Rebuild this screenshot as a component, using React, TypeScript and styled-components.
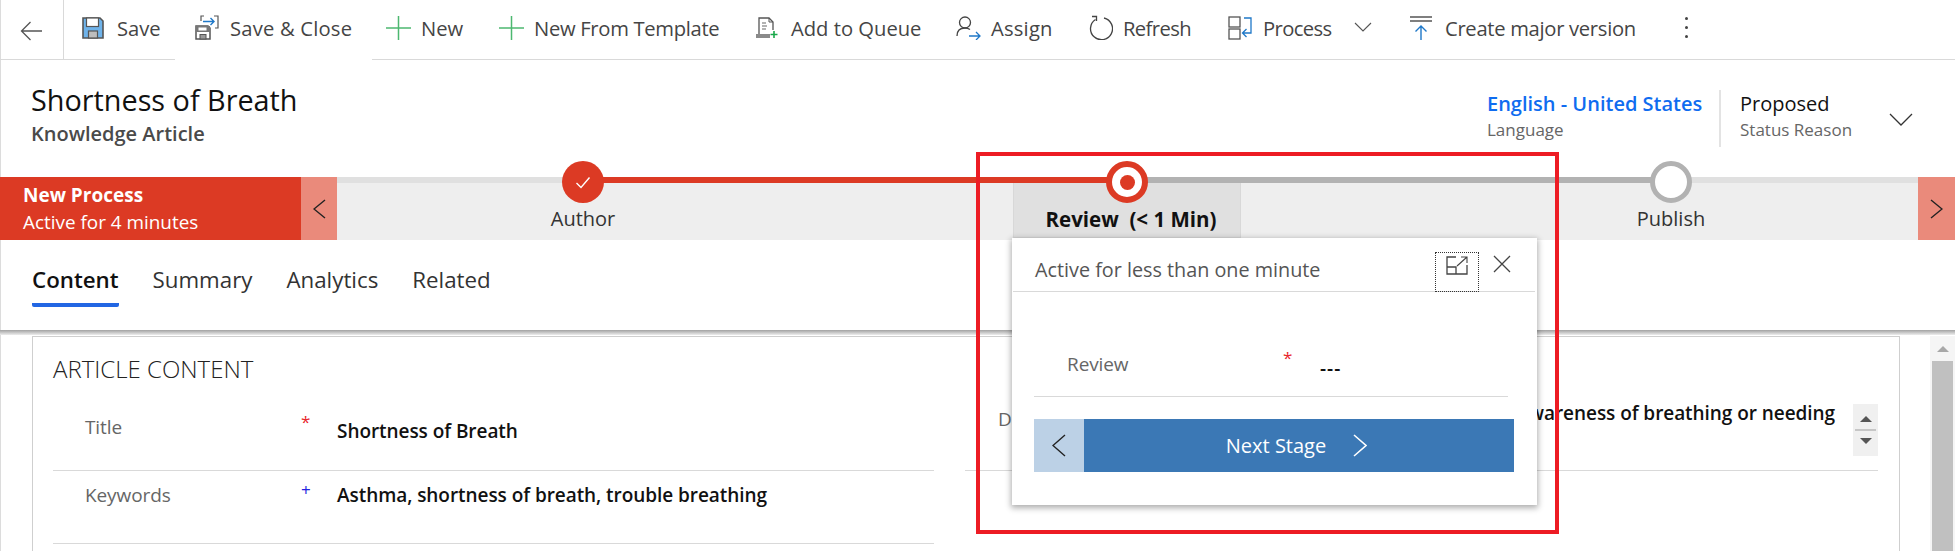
import React from "react";
import styled, { createGlobalStyle } from "styled-components";

const Global = createGlobalStyle`
  html, body { margin: 0; padding: 0; background: #fff; }
  * { box-sizing: border-box; }
`;

const Page = styled.div`
  position: relative;
  width: 1955px;
  height: 551px;
  overflow: hidden;
  background: #fff;
  box-shadow: inset 1px 0 0 #dcdcdc;
  font-family: "Open Sans", "Noto Sans", sans-serif;
  color: #333;
`;

/* ---------- command bar ---------- */
const Toolbar = styled.div`
  display: flex;
  align-items: center;
  height: 60px;
  border-bottom: 1px solid #d9d9d9;
  padding-right: 20px;
`;
const BackButton = styled.div`
  display: flex;
  align-items: center;
  justify-content: center;
  width: 64px;
  height: 59px;
  padding-right: 1px;
  padding-top: 2px;
  margin-right: 18px;
  border-right: 1px solid #d9d9d9;
`;
const ToolButton = styled.div<{ $w: number; $ls: number; $open?: boolean }>`
  position: relative;
  display: flex;
  align-items: center;
  width: ${(p) => p.$w}px;
  height: 59px;
  padding-bottom: 4px;
  font-size: 20.2px;
  letter-spacing: ${(p) => p.$ls}px;
  color: #454545;
  white-space: nowrap;
  ${(p) =>
    p.$open
      ? `&::after { content: ""; position: absolute; left: -20px; right: 14px; bottom: -1px; height: 1px; background: #fff; }`
      : ""}
`;
const IconSlot = styled.span`
  display: flex;
  align-items: center;
  width: 35px;
  flex: none;
  svg { display: block; }
`;
const Caret = styled.span`
  display: flex;
  margin-left: 22px;
  margin-top: -2px;
`;
const More = styled.div`
  display: flex;
  flex-direction: column;
  gap: 6px;
  margin-top: -4px;
`;
const Dot = styled.i`
  display: block;
  width: 3px;
  height: 3px;
  border-radius: 50%;
  background: #444;
`;

/* ---------- record header ---------- */
const Header = styled.div`
  display: flex;
  justify-content: space-between;
  height: 117px;
  padding-left: 31px;
`;
const TitleBlock = styled.div`
  padding-top: 22px;
`;
const RecordTitle = styled.div`
  font-size: 28.8px;
  line-height: 36px;
  font-weight: 500;
  color: #111;
`;
const RecordType = styled.div`
  margin-top: 4px;
  font-size: 20px;
  line-height: 24px;
  font-weight: 600;
  color: #4a4a4a;
`;
const HeaderFields = styled.div`
  display: flex;
  margin-top: 30px;
  height: 57px;
`;
const HeaderField = styled.div<{ $w: number; $rule?: boolean }>`
  width: ${(p) => p.$w}px;
  padding-top: 2px;
  ${(p) => (p.$rule ? "border-right: 2px solid #e3e3e3;" : "padding-left: 19px;")}
`;
const FieldValue = styled.div<{ $link?: boolean }>`
  font-size: 20px;
  line-height: 24px;
  font-weight: ${(p) => (p.$link ? 600 : 500)};
  color: ${(p) => (p.$link ? "#0f6cf0" : "#111")};
  white-space: nowrap;
`;
const FieldCaption = styled.div`
  margin-top: 2px;
  font-size: 17px;
  line-height: 24px;
  color: #666;
`;
const StatusField = styled.div`
  display: flex;
  align-items: flex-start;
`;
const StatusCaret = styled.span`
  display: flex;
  width: 66px;
  padding-top: 23px;
`;

/* ---------- business process bar ---------- */
const ProcessBar = styled.div`
  display: flex;
  height: 63px;
`;
const ProcessTag = styled.div`
  width: 301px;
  padding-left: 23px;
  background: #dc3a24;
  color: #fff;
`;
const ProcessName = styled.div`
  padding-top: 6px;
  font-size: 19px;
  line-height: 24px;
  font-weight: 700;
`;
const ProcessAge = styled.div`
  margin-top: 3px;
  font-size: 18.9px;
  line-height: 24px;
`;
const NavBlock = styled.div<{ $w: number }>`
  display: flex;
  align-items: center;
  justify-content: center;
  width: ${(p) => p.$w}px;
  background: #ea8a7b;
  flex: none;
`;
const Track = styled.div`
  flex: 1;
  min-width: 0;
  background: #eee;
`;
const TrackLine = styled.div`
  height: 6px;
  background: linear-gradient(
    to right,
    #e0e0e0 0 246px,
    #dc3a24 246px 789px,
    #b2b2b2 789px 1334px,
    #e0e0e0 1334px
  );
`;
const Stages = styled.div`
  display: flex;
  justify-content: center;
  height: 57px;
  padding-right: 1px;
`;
const Stage = styled.div`
  position: relative;
  flex: 0 0 544px;
  display: flex;
  justify-content: center;
`;
const StageNode = styled.div<{ $kind: "done" | "active" | "todo" }>`
  position: absolute;
  z-index: 2;
  left: 50%;
  top: -22px;
  width: 42px;
  height: 42px;
  margin-left: -21px;
  border-radius: 50%;
  display: flex;
  align-items: center;
  justify-content: center;
  ${(p) =>
    p.$kind === "done"
      ? "background: #dc3a24;"
      : p.$kind === "active"
      ? "background: #fff; border: 6px solid #dc3a24;"
      : "background: #fff; border: 5px solid #b2b2b2;"}
`;
const NodeCore = styled.i`
  display: block;
  width: 15px;
  height: 15px;
  border-radius: 50%;
  background: #dc3a24;
`;
const StageLabel = styled.div<{ $active?: boolean }>`
  height: ${(p) => (p.$active ? "55px" : "57px")};
  width: ${(p) => (p.$active ? "228px" : "auto")};
  padding-top: 24px;
  padding-left: ${(p) => (p.$active ? "8px" : "0")};
  text-align: center;
  font-size: ${(p) => (p.$active ? "20.5px" : "20px")};
  line-height: 24px;
  white-space: pre;
  ${(p) =>
    p.$active
      ? "background: #e0e0e0; border: 1px solid #d8d8d8; border-top: 0; font-weight: 700; color: #111;"
      : "color: #333;"}
`;

/* ---------- tabs ---------- */
const TabList = styled.div`
  display: flex;
  height: 90px;
  padding-left: 32px;
  gap: 34px;
`;
const TabItem = styled.div<{ $active?: boolean }>`
  position: relative;
  padding-top: 27px;
  height: 67px;
  font-size: 22.3px;
  line-height: 26px;
  font-weight: ${(p) => (p.$active ? 600 : 400)};
  color: ${(p) => (p.$active ? "#111" : "#333")};
  border-bottom: ${(p) => (p.$active ? "4px solid #2266e3" : "4px solid transparent")};
  border-radius: 0 0 2px 2px;
`;
const ShadowBand = styled.div`
  height: 5px;
  background: linear-gradient(to bottom, #a2a2a2, #ededed);
`;

/* ---------- form area ---------- */
const FormArea = styled.div`
  display: flex;
  height: 216px;
  padding: 1px 0 0 32px;
`;
const Card = styled.div`
  width: 1868px;
  border: 1px solid #cfcfcf;
  border-bottom: 0;
  padding: 0 20px;
`;
const SectionHeading = styled.div`
  height: 61px;
  padding-top: 18px;
  font-size: 24px;
  line-height: 28px;
  font-weight: 300;
  color: #222;
`;
const Columns = styled.div`
  display: grid;
  grid-template-columns: 881px 913px;
  column-gap: 31px;
`;
const FieldRow = styled.div<{ $top: number }>`
  display: grid;
  grid-template-columns: 248px 36px 1fr;
  height: 73px;
  padding-top: ${(p) => p.$top}px;
  border-bottom: 1px solid #d9d9d9;
`;
const FieldLabel = styled.div`
  padding-left: 32px;
  font-size: 19px;
  line-height: 24px;
  letter-spacing: -0.1px;
  color: #666;
`;
const Req = styled.span<{ $blue?: boolean }>`
  font-size: 17px;
  line-height: 14px;
  color: ${(p) => (p.$blue ? "#2222e0" : "#e8262c")};
`;
const FieldText = styled.div<{ $dy?: number }>`
  margin-top: ${(p) => p.$dy ?? 0}px;
  font-size: 19px;
  line-height: 24px;
  font-weight: 600;
  letter-spacing: -0.06px;
  color: #111;
  white-space: nowrap;
`;
const DescriptionRow = styled.div`
  display: flex;
  align-items: flex-start;
  height: 73px;
  padding-top: 6px;
  border-bottom: 1px solid #d9d9d9;
`;
const DescriptionLabel = styled.div`
  padding-left: 33px;
  margin-top: 3px;
  font-size: 19px;
  line-height: 24px;
  letter-spacing: -0.1px;
  color: #666;
`;
const DescriptionText = styled.div`
  flex: 1;
  display: flex;
  justify-content: flex-end;
  margin-right: 18px;
  margin-top: -3px;
  min-width: 0;
  font-size: 19px;
  line-height: 24px;
  font-weight: 600;
  letter-spacing: -0.06px;
  color: #111;
  white-space: nowrap;
`;
const Spinner = styled.div`
  flex: none;
  width: 25px;
  height: 52px;
  background: #f0f0f0;
  display: flex;
  flex-direction: column;
  align-items: center;
  justify-content: center;
  gap: 7px;
`;
const SpinUp = styled.i`
  display: block;
  border-left: 6px solid transparent;
  border-right: 6px solid transparent;
  border-bottom: 6px solid #555;
`;
const SpinDown = styled.i`
  display: block;
  border-left: 6px solid transparent;
  border-right: 6px solid transparent;
  border-top: 6px solid #555;
`;
const SpinRule = styled.i`
  display: block;
  width: 21px;
  height: 2px;
  background: #c6c6c6;
`;
const ScrollBar = styled.div`
  flex: none;
  margin-left: 30px;
  width: 25px;
  background: #f5f5f5;
  display: flex;
  flex-direction: column;
  align-items: center;
`;
const ScrollUp = styled.i`
  display: block;
  margin: 10px 0 9px;
  border-left: 6px solid transparent;
  border-right: 6px solid transparent;
  border-bottom: 6px solid #a8a8a8;
`;
const ScrollThumb = styled.div`
  width: 21px;
  flex: 1;
  background: #c0c0c0;
`;

/* ---------- stage flyout ---------- */
const Flyout = styled.div`
  position: absolute;
  z-index: 3;
  left: 1012px;
  top: 238px;
  width: 525px;
  height: 267px;
  background: #fff;
  box-shadow: 0 2px 6px 1px rgba(0, 0, 0, 0.32);
`;
const FlyoutHeader = styled.div`
  display: flex;
  align-items: flex-start;
  height: 54px;
  margin: 0 2px 0 1px;
  padding-left: 22px;
  border-bottom: 1px solid #d9d9d9;
`;
const FlyoutTitle = styled.div`
  flex: 1;
  padding-top: 20px;
  font-size: 19.8px;
  line-height: 24px;
  color: #555;
`;
const ExpandBox = styled.div`
  width: 44px;
  height: 40px;
  margin-top: 14px;
  border: 1px dotted #333;
  display: flex;
  justify-content: center;
  padding-top: 3px;
`;
const CloseBox = styled.div`
  width: 56px;
  padding: 17px 0 0 14px;
`;
const StepRow = styled.div`
  display: grid;
  grid-template-columns: 216px 37px 1fr;
  height: 105px;
  margin: 0 29px 0 22px;
  padding: 60px 0 0 33px;
  border-bottom: 1px solid #d9d9d9;
`;
const StepLabel = styled.div`
  font-size: 19px;
  line-height: 24px;
  letter-spacing: -0.1px;
  color: #666;
`;
const StepValue = styled.div`
  margin-top: 4px;
  font-size: 19px;
  line-height: 24px;
  font-weight: 600;
  letter-spacing: 1px;
  color: #111;
`;
const StepReq = styled(Req)`
  margin-top: -1px;
`;
const StageNav = styled.div`
  display: flex;
  height: 53px;
  margin: 22px 23px 0 22px;
`;
const StageBack = styled.div`
  display: flex;
  align-items: center;
  justify-content: center;
  width: 50px;
  background: #bcd1e6;
`;
const StageNext = styled.div`
  flex: 1;
  display: flex;
  align-items: center;
  justify-content: center;
  gap: 27px;
  padding-right: 5px;
  background: #3b78b5;
  color: #fff;
  font-size: 20px;
`;

/* ---------- annotation ---------- */
const Highlight = styled.div`
  position: absolute;
  z-index: 4;
  left: 976px;
  top: 152px;
  width: 583px;
  height: 382px;
  border: 4px solid #ed1c24;
  pointer-events: none;
`;

/* ---------- drawings ---------- */
const Chevron = ({ dir, c = "#222", w = 13, h = 20, sw = 1.4 }: { dir: "l" | "r" | "d"; c?: string; w?: number; h?: number; sw?: number }) => {
  const d =
    dir === "l"
      ? `M${w - 1} 1 L1 ${h / 2} L${w - 1} ${h - 1}`
      : dir === "r"
      ? `M1 1 L${w - 1} ${h / 2} L1 ${h - 1}`
      : `M1 1 L${w / 2} ${h - 1} L${w - 1} 1`;
  return (
    <svg width={w} height={h} viewBox={`0 0 ${w} ${h}`} fill="none">
      <path d={d} stroke={c} strokeWidth={sw} />
    </svg>
  );
};

const BackArrow = () => (
  <svg width="22" height="20" viewBox="0 0 22 20" fill="none">
    <path d="M22 10H1.5M10.5 1L1.5 10L10.5 19" stroke="#555" strokeWidth="1.3" />
  </svg>
);
const SaveIcon = () => (
  <svg width="22" height="22" viewBox="0 0 22 22">
    <path d="M1 1h17l3 3v17H1z" fill="#6fb3ea" stroke="#555" strokeWidth="1.6" />
    <rect x="4.5" y="1" width="12" height="8.5" fill="#fff" stroke="#555" strokeWidth="1.2" />
    <rect x="6.5" y="14" width="9" height="7" fill="#bdbdbd" stroke="#555" strokeWidth="1.2" />
  </svg>
);
const SaveCloseIcon = () => (
  <svg width="24" height="25" viewBox="0 0 24 25" fill="none">
    <path d="M6 6V1h3M19 1h4v12h-3" stroke="#555" strokeWidth="1.2" />
    <path d="M8 6.5h11M15.5 3l3.5 3.5L15.5 10" stroke="#1f78c8" strokeWidth="1.4" />
    <path d="M1 11h12l2 2v11H1z" fill="#fff" stroke="#555" strokeWidth="1.5" />
    <rect x="1" y="11" width="14" height="6" fill="#777" />
    <rect x="3.5" y="12.5" width="8" height="3" fill="#fff" />
    <rect x="5" y="19.5" width="6" height="4.5" fill="#999" stroke="#555" />
  </svg>
);
const PlusIcon = () => (
  <svg width="25" height="24" viewBox="0 0 25 24" fill="none">
    <path d="M0 12h25M12.5 0v24" stroke="#4db870" strokeWidth="1.5" />
  </svg>
);
const QueueIcon = () => (
  <svg width="23" height="22" viewBox="0 0 23 22" fill="none">
    <path d="M3 17V1h10l4 4v8" stroke="#555" strokeWidth="1.3" />
    <path d="M13 1v4h4" stroke="#555" strokeWidth="1" />
    <path d="M6 6h4M6 9h5M6 12h4" stroke="#666" strokeWidth="1.2" />
    <rect x="0" y="17" width="14" height="4" fill="#8a8a8a" />
    <path d="M18 14v7M14.5 17.5h7" stroke="#19a84a" strokeWidth="1.6" />
  </svg>
);
const AssignIcon = () => (
  <svg width="25" height="24" viewBox="0 0 25 24" fill="none">
    <circle cx="9" cy="6.5" r="5.5" stroke="#444" strokeWidth="1.3" />
    <path d="M1 20c0-5 3-8 8-8 2 0 3.500.5 5 1.500" stroke="#444" strokeWidth="1.3" />
    <path d="M13 20h11M20 16l4 4-4 4" stroke="#1f78c8" strokeWidth="1.3" />
  </svg>
);
const RefreshIcon = () => (
  <svg width="25" height="25" viewBox="0 0 25 25" fill="none">
    <path d="M7.500 4.500A11 11 0 1 0 16 3" stroke="#444" strokeWidth="1.3" />
    <path d="M4 1.500h4.500V6" stroke="#444" strokeWidth="1.3" />
  </svg>
);
const ProcessIcon = () => (
  <svg width="24" height="24" viewBox="0 0 24 24" fill="none">
    <rect x="1" y="1" width="11" height="10" stroke="#555" strokeWidth="1.3" />
    <rect x="1" y="13" width="11" height="10" stroke="#555" strokeWidth="1.3" />
    <path d="M16 2h7v15H15M18.500 13L14.500 17l4 4" stroke="#1f78c8" strokeWidth="1.3" />
  </svg>
);
const VersionIcon = () => (
  <svg width="23" height="24" viewBox="0 0 23 24" fill="none">
    <path d="M0 1h22M0 5h22" stroke="#555" strokeWidth="1.3" />
    <path d="M11 24V10M5.500 15.500L11 10l5.500 5.500" stroke="#1f78c8" strokeWidth="1.4" />
  </svg>
);
const CheckMark = () => (
  <svg width="16" height="13" viewBox="0 0 16 13" fill="none">
    <path d="M1.500 7l4.500 4.500L14.500 1.500" stroke="#fff" strokeWidth="1.4" />
  </svg>
);
const ExpandIcon = () => (
  <svg width="22" height="19" viewBox="0 0 22 19" fill="none">
    <path d="M10 1H1v17h20V9" stroke="#444" strokeWidth="1.3" />
    <path d="M1 11h9v7" stroke="#444" strokeWidth="1.3" />
    <path d="M11 10L21 1M15 1h6v6" stroke="#444" strokeWidth="1.1" />
  </svg>
);
const CloseIcon = () => (
  <svg width="18" height="18" viewBox="0 0 18 18" fill="none">
    <path d="M1 1l16 16M17 1L1 17" stroke="#444" strokeWidth="1.3" />
  </svg>
);

const tools: { label: string; w: number; ls: number; icon: React.ReactNode; open?: boolean; caret?: boolean }[] = [
  { label: "Save", w: 113, ls: 0, icon: <SaveIcon /> },
  { label: "Save & Close", w: 191, ls: 0.2, icon: <SaveCloseIcon />, open: true },
  { label: "New", w: 113, ls: 0, icon: <PlusIcon /> },
  { label: "New From Template", w: 257, ls: -0.3, icon: <PlusIcon /> },
  { label: "Add to Queue", w: 200, ls: 0, icon: <QueueIcon /> },
  { label: "Assign", w: 132, ls: 0.2, icon: <AssignIcon /> },
  { label: "Refresh", w: 140, ls: -0.6, icon: <RefreshIcon /> },
  { label: "Process", w: 182, ls: -0.6, icon: <ProcessIcon />, caret: true },
  { label: "Create major version", w: 275, ls: -0.3, icon: <VersionIcon /> },
];

export default function App() {
  return (
    <Page>
      <Global />
      <Toolbar>
        <BackButton>
          <BackArrow />
        </BackButton>
        {tools.map((t) => (
          <ToolButton key={t.label} $w={t.w} $ls={t.ls} $open={t.open}>
            <IconSlot>{t.icon}</IconSlot>
            {t.label}
            {t.caret && (
              <Caret>
                <Chevron dir="d" c="#555" w={18} h={10} sw={1.1} />
              </Caret>
            )}
          </ToolButton>
        ))}
        <More>
          <Dot />
          <Dot />
          <Dot />
        </More>
      </Toolbar>

      <Header>
        <TitleBlock>
          <RecordTitle>Shortness of Breath</RecordTitle>
          <RecordType>Knowledge Article</RecordType>
        </TitleBlock>
        <HeaderFields>
          <HeaderField $w={234} $rule>
            <FieldValue $link>English - United States</FieldValue>
            <FieldCaption>Language</FieldCaption>
          </HeaderField>
          <StatusField>
            <HeaderField $w={168}>
              <FieldValue>Proposed</FieldValue>
              <FieldCaption>Status Reason</FieldCaption>
            </HeaderField>
            <StatusCaret>
              <Chevron dir="d" c="#333" w={24} h={13} sw={1.3} />
            </StatusCaret>
          </StatusField>
        </HeaderFields>
      </Header>

      <ProcessBar>
        <ProcessTag>
          <ProcessName>New Process</ProcessName>
          <ProcessAge>Active for 4 minutes</ProcessAge>
        </ProcessTag>
        <NavBlock $w={36}>
          <Chevron dir="l" />
        </NavBlock>
        <Track>
          <TrackLine />
          <Stages>
            <Stage>
              <StageNode $kind="done">
                <CheckMark />
              </StageNode>
              <StageLabel>Author</StageLabel>
            </Stage>
            <Stage>
              <StageNode $kind="active">
                <NodeCore />
              </StageNode>
              <StageLabel $active>{"Review  (< 1 Min)"}</StageLabel>
            </Stage>
            <Stage>
              <StageNode $kind="todo" />
              <StageLabel>Publish</StageLabel>
            </Stage>
          </Stages>
        </Track>
        <NavBlock $w={37}>
          <Chevron dir="r" />
        </NavBlock>
      </ProcessBar>

      <TabList>
        <TabItem $active>Content</TabItem>
        <TabItem>Summary</TabItem>
        <TabItem>Analytics</TabItem>
        <TabItem>Related</TabItem>
      </TabList>
      <ShadowBand />

      <FormArea>
        <Card>
          <SectionHeading>ARTICLE CONTENT</SectionHeading>
          <Columns>
            <div>
              <FieldRow $top={17}>
                <FieldLabel>Title</FieldLabel>
                <Req>*</Req>
                <FieldText $dy={4}>Shortness of Breath</FieldText>
              </FieldRow>
              <FieldRow $top={12}>
                <FieldLabel>Keywords</FieldLabel>
                <Req $blue>+</Req>
                <FieldText>Asthma, shortness of breath, trouble breathing</FieldText>
              </FieldRow>
            </div>
            <DescriptionRow>
              <DescriptionLabel>Description</DescriptionLabel>
              <DescriptionText>Shortness of breath is an uncomfortable awareness of breathing or needing</DescriptionText>
              <Spinner>
                <SpinUp />
                <SpinRule />
                <SpinDown />
              </Spinner>
            </DescriptionRow>
          </Columns>
        </Card>
        <ScrollBar>
          <ScrollUp />
          <ScrollThumb />
        </ScrollBar>
      </FormArea>

      <Flyout>
        <FlyoutHeader>
          <FlyoutTitle>Active for less than one minute</FlyoutTitle>
          <ExpandBox>
            <ExpandIcon />
          </ExpandBox>
          <CloseBox>
            <CloseIcon />
          </CloseBox>
        </FlyoutHeader>
        <StepRow>
          <StepLabel>Review</StepLabel>
          <StepReq>*</StepReq>
          <StepValue>---</StepValue>
        </StepRow>
        <StageNav>
          <StageBack>
            <Chevron dir="l" w={14} h={23} />
          </StageBack>
          <StageNext>
            Next Stage
            <Chevron dir="r" c="#fff" w={14} h={23} sw={1.6} />
          </StageNext>
        </StageNav>
      </Flyout>

      <Highlight />
    </Page>
  );
}
